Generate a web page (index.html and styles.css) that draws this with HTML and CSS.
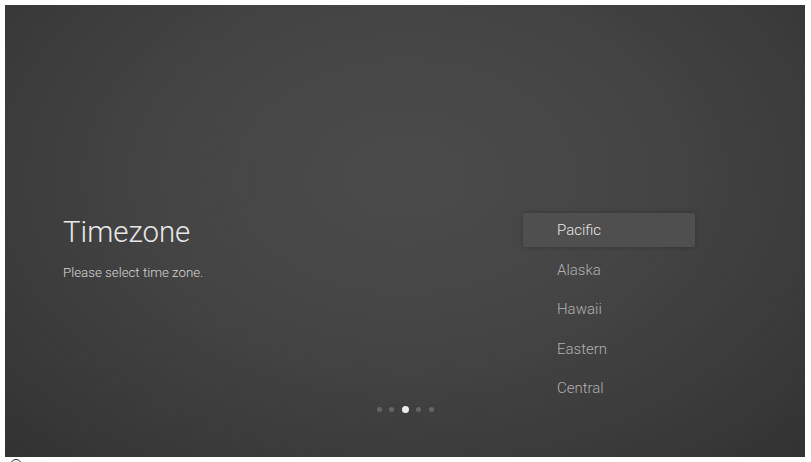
FILE: index.html
```html
<!DOCTYPE html>
<html>
<head>
<meta charset="utf-8">
<link rel="stylesheet" href="styles.css">
</head>
<body>
<div class="screen">
  <div class="main">
    <div class="intro">
      <h1 class="title">Timezone</h1>
      <p class="subtitle">Please select time zone.</p>
    </div>
    <ul class="zones">
      <li class="zone selected">Pacific</li>
      <li class="zone">Alaska</li>
      <li class="zone">Hawaii</li>
      <li class="zone">Eastern</li>
      <li class="zone">Central</li>
    </ul>
  </div>
  <div class="dots">
    <span class="dot"></span>
    <span class="dot"></span>
    <span class="dot active"></span>
    <span class="dot"></span>
    <span class="dot"></span>
  </div>
</div>
<div class="mark"></div>
</body>
</html>
```

FILE: styles.css
```css
html, body {
  margin: 0;
  padding: 0;
  background: #ffffff;
  overflow: hidden;
}
body {
  width: 811px;
  height: 462px;
  font-family: Roboto, "Liberation Sans", sans-serif;
}
.screen {
  margin: 5px 0 0 5px;
  width: 800px;
  height: 452px;
  display: flex;
  flex-direction: column;
  background: radial-gradient(ellipse 70% 85% at 50% 38%, #4b4b4b 0%, #444444 45%, #383838 85%, #333333 100%);
}
.main {
  display: flex;
  flex-direction: row;
  margin-top: 207px;
}
.intro {
  flex: 1;
  padding-left: 58px;
}
.title {
  margin: 0;
  padding-top: 1px;
  font-size: 29.4px;
  line-height: 39px;
  font-weight: 300;
  color: #e8e8e8;
}
.subtitle {
  margin: 13px 0 0 0;
  font-size: 13.3px;
  line-height: 16px;
  font-weight: 300;
  color: #d6d6d6;
}
.zones {
  list-style: none;
  margin: 1px 110px 0 0;
  padding: 0;
  width: 172px;
  display: flex;
  flex-direction: column;
  gap: 5.5px;
}
.zone {
  height: 34px;
  line-height: 34px;
  padding-left: 34px;
  font-size: 15px;
  font-weight: 300;
  color: #b0b0b0;
  border-radius: 2px;
}
.zone.selected {
  color: #e6e6e6;
  background: #4f4f4f;
  box-shadow: 0 0 4px rgba(0, 0, 0, 0.25);
}
.dots {
  margin-top: auto;
  margin-bottom: 44px;
  display: flex;
  justify-content: center;
  align-items: center;
  gap: 7.5px;
}
.dot {
  width: 5px;
  height: 5px;
  border-radius: 50%;
  background: #666666;
}
.dot.active {
  width: 7px;
  height: 7px;
  background: #ececec;
}
.mark {
  margin: 1.5px 0 0 10px;
  width: 10px;
  height: 10px;
  border: 1.5px solid #333333;
  border-radius: 50%;
}
```
